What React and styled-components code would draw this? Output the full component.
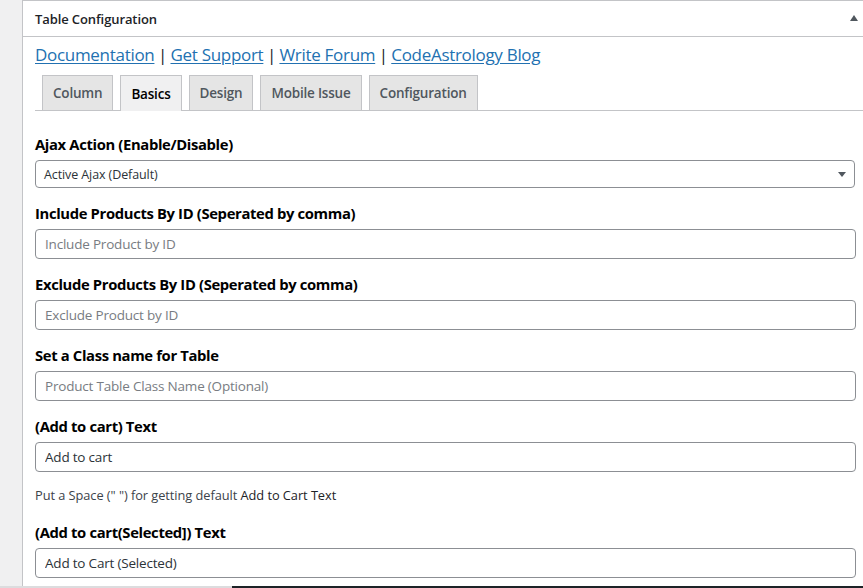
import React from 'react'
import styled, { createGlobalStyle } from 'styled-components'

const GlobalStyle = createGlobalStyle`
  html, body {
    margin: 0;
    padding: 0;
    background: #f0f0f1;
    font-family: "Open Sans", "Noto Sans", sans-serif;
    color: #1d2327;
    overflow: hidden;
  }
`

const Page = styled.div`
  height: 588px;
  display: flex;
  flex-direction: column;
  padding-left: 22px;
  box-sizing: border-box;
`

const Postbox = styled.div`
  flex: 1;
  width: 860px;
  background: #fff;
  border: 1px solid #c3c4c7;
  border-bottom: none;
  box-sizing: border-box;
  overflow: hidden;
`

const PostboxHeader = styled.div`
  height: 35px;
  border-bottom: 1px solid #c3c4c7;
  display: flex;
  align-items: center;
  justify-content: space-between;
  padding: 0 12px 0 12px;
`

const PostboxTitle = styled.h2`
  margin: 0;
  font-size: 13px;
  font-weight: 600;
  color: #1d2327;
  letter-spacing: -0.1px;
`

const Toggle = styled.span`
  width: 0;
  height: 0;
  margin-right: 11px;
  margin-top: -1px;
  border-left: 4px solid transparent;
  border-right: 4px solid transparent;
  border-bottom: 6px solid #50575e;
`

const Inside = styled.div`
  padding: 5px 7px 0 12px;
`

const LinkRow = styled.div`
  display: flex;
  font-size: 17px;
  line-height: 26px;
  font-weight: 500;
  color: #1d2327;
  letter-spacing: -0.3px;
`

const DocLink = styled.a`
  color: #2271b1;
  text-decoration: underline;
  text-underline-offset: 2px;
`

const Sep = styled.span`
  margin: 0 3.5px;
`

const Tabs = styled.div`
  margin-top: 7px;
  padding-left: 7px;
  display: flex;
  gap: 7px;
  border-bottom: 1px solid #c3c4c7;
  height: 35px;
`

const Tab = styled.div`
  box-sizing: border-box;
  padding: 0 10px;
  display: flex;
  align-items: center;
  font-size: 13.5px;
  font-weight: 600;
  letter-spacing: -0.2px;
  border: 1px solid #c3c4c7;
  border-bottom: none;
  background: ${p => (p.$active ? '#f0f0f1' : '#e5e5e5')};
  color: ${p => (p.$active ? '#000' : '#50575e')};
  height: ${p => (p.$active ? '36px' : '35px')};
`

const Form = styled.div`
  padding-top: 23px;
  display: flex;
  flex-direction: column;
`

const Field = styled.div`
  display: flex;
  flex-direction: column;
  margin-bottom: 15px;
`

const Label = styled.label`
  font-size: 14.8px;
  font-weight: 700;
  color: #000;
  line-height: 20px;
  margin-bottom: 6px;
  letter-spacing: -0.35px;
`

const TextInput = styled.input`
  width: 821px;
  height: 30px;
  box-sizing: border-box;
  border: 1px solid #8c8f94;
  border-radius: 4px;
  padding: 0 9px;
  font-family: inherit;
  font-size: 13.5px;
  color: #2c3338;
  letter-spacing: -0.2px;
  outline: none;
  &::placeholder {
    color: #787c82;
  }
`

const SelectBox = styled.div`
  width: 820px;
  height: 28px;
  box-sizing: border-box;
  border: 1px solid #8c8f94;
  border-radius: 4px;
  padding: 0 8px;
  display: flex;
  align-items: center;
  justify-content: space-between;
  font-size: 12.5px;
  color: #2c3338;
  letter-spacing: -0.1px;
`

const Caret = styled.span`
  width: 0;
  height: 0;
  border-left: 4px solid transparent;
  border-right: 4px solid transparent;
  border-top: 5px solid #50575e;
`

const Help = styled.p`
  margin: -1px 0 18px;
  font-size: 12.8px;
  line-height: 18px;
  color: #3c434a;
  letter-spacing: -0.05px;
  b {
    font-weight: 400;
    color: #1d2327;
  }
`

const Footer = styled.div`
  height: 2px;
  margin-left: -22px;
  display: flex;
`

const FooterPart = styled.div`
  flex: ${p => p.$grow || 'none'};
  width: ${p => p.$w || 'auto'};
  background: ${p => p.$c};
`

const tabs = ['Column', 'Basics', 'Design', 'Mobile Issue', 'Configuration']

const links = ['Documentation', 'Get Support', 'Write Forum', 'CodeAstrology Blog']

const fields = [
  { label: 'Include Products By ID (Seperated by comma)', placeholder: 'Include Product by ID' },
  { label: 'Exclude Products By ID (Seperated by comma)', placeholder: 'Exclude Product by ID' },
  { label: 'Set a Class name for Table', placeholder: 'Product Table Class Name (Optional)' },
]

export default function App() {
  return (
    <>
      <GlobalStyle />
      <Page>
        <Postbox>
          <PostboxHeader>
            <PostboxTitle>Table Configuration</PostboxTitle>
            <Toggle />
          </PostboxHeader>
          <Inside>
            <LinkRow>
              {links.map((l, i) => (
                <React.Fragment key={l}>
                  {i > 0 && <Sep>|</Sep>}
                  <DocLink href="#">{l}</DocLink>
                </React.Fragment>
              ))}
            </LinkRow>
            <Tabs>
              {tabs.map(t => (
                <Tab key={t} $active={t === 'Basics'}>{t}</Tab>
              ))}
            </Tabs>
            <Form>
              <Field>
                <Label>Ajax Action (Enable/Disable)</Label>
                <SelectBox>
                  Active Ajax (Default)
                  <Caret />
                </SelectBox>
              </Field>
              {fields.map(f => (
                <Field key={f.label}>
                  <Label>{f.label}</Label>
                  <TextInput placeholder={f.placeholder} />
                </Field>
              ))}
              <Field>
                <Label>(Add to cart) Text</Label>
                <TextInput defaultValue="Add to cart" />
              </Field>
              <Help>
                Put a Space (" ") for getting default <b>Add to Cart Text</b>
              </Help>
              <Field>
                <Label>(Add to cart(Selected]) Text</Label>
                <TextInput defaultValue="Add to Cart (Selected)" />
              </Field>
            </Form>
          </Inside>
        </Postbox>
        <Footer>
          <FooterPart $w="232px" $c="#dcdcde" />
          <FooterPart $grow={1} $c="#1d2327" />
        </Footer>
      </Page>
    </>
  )
}
